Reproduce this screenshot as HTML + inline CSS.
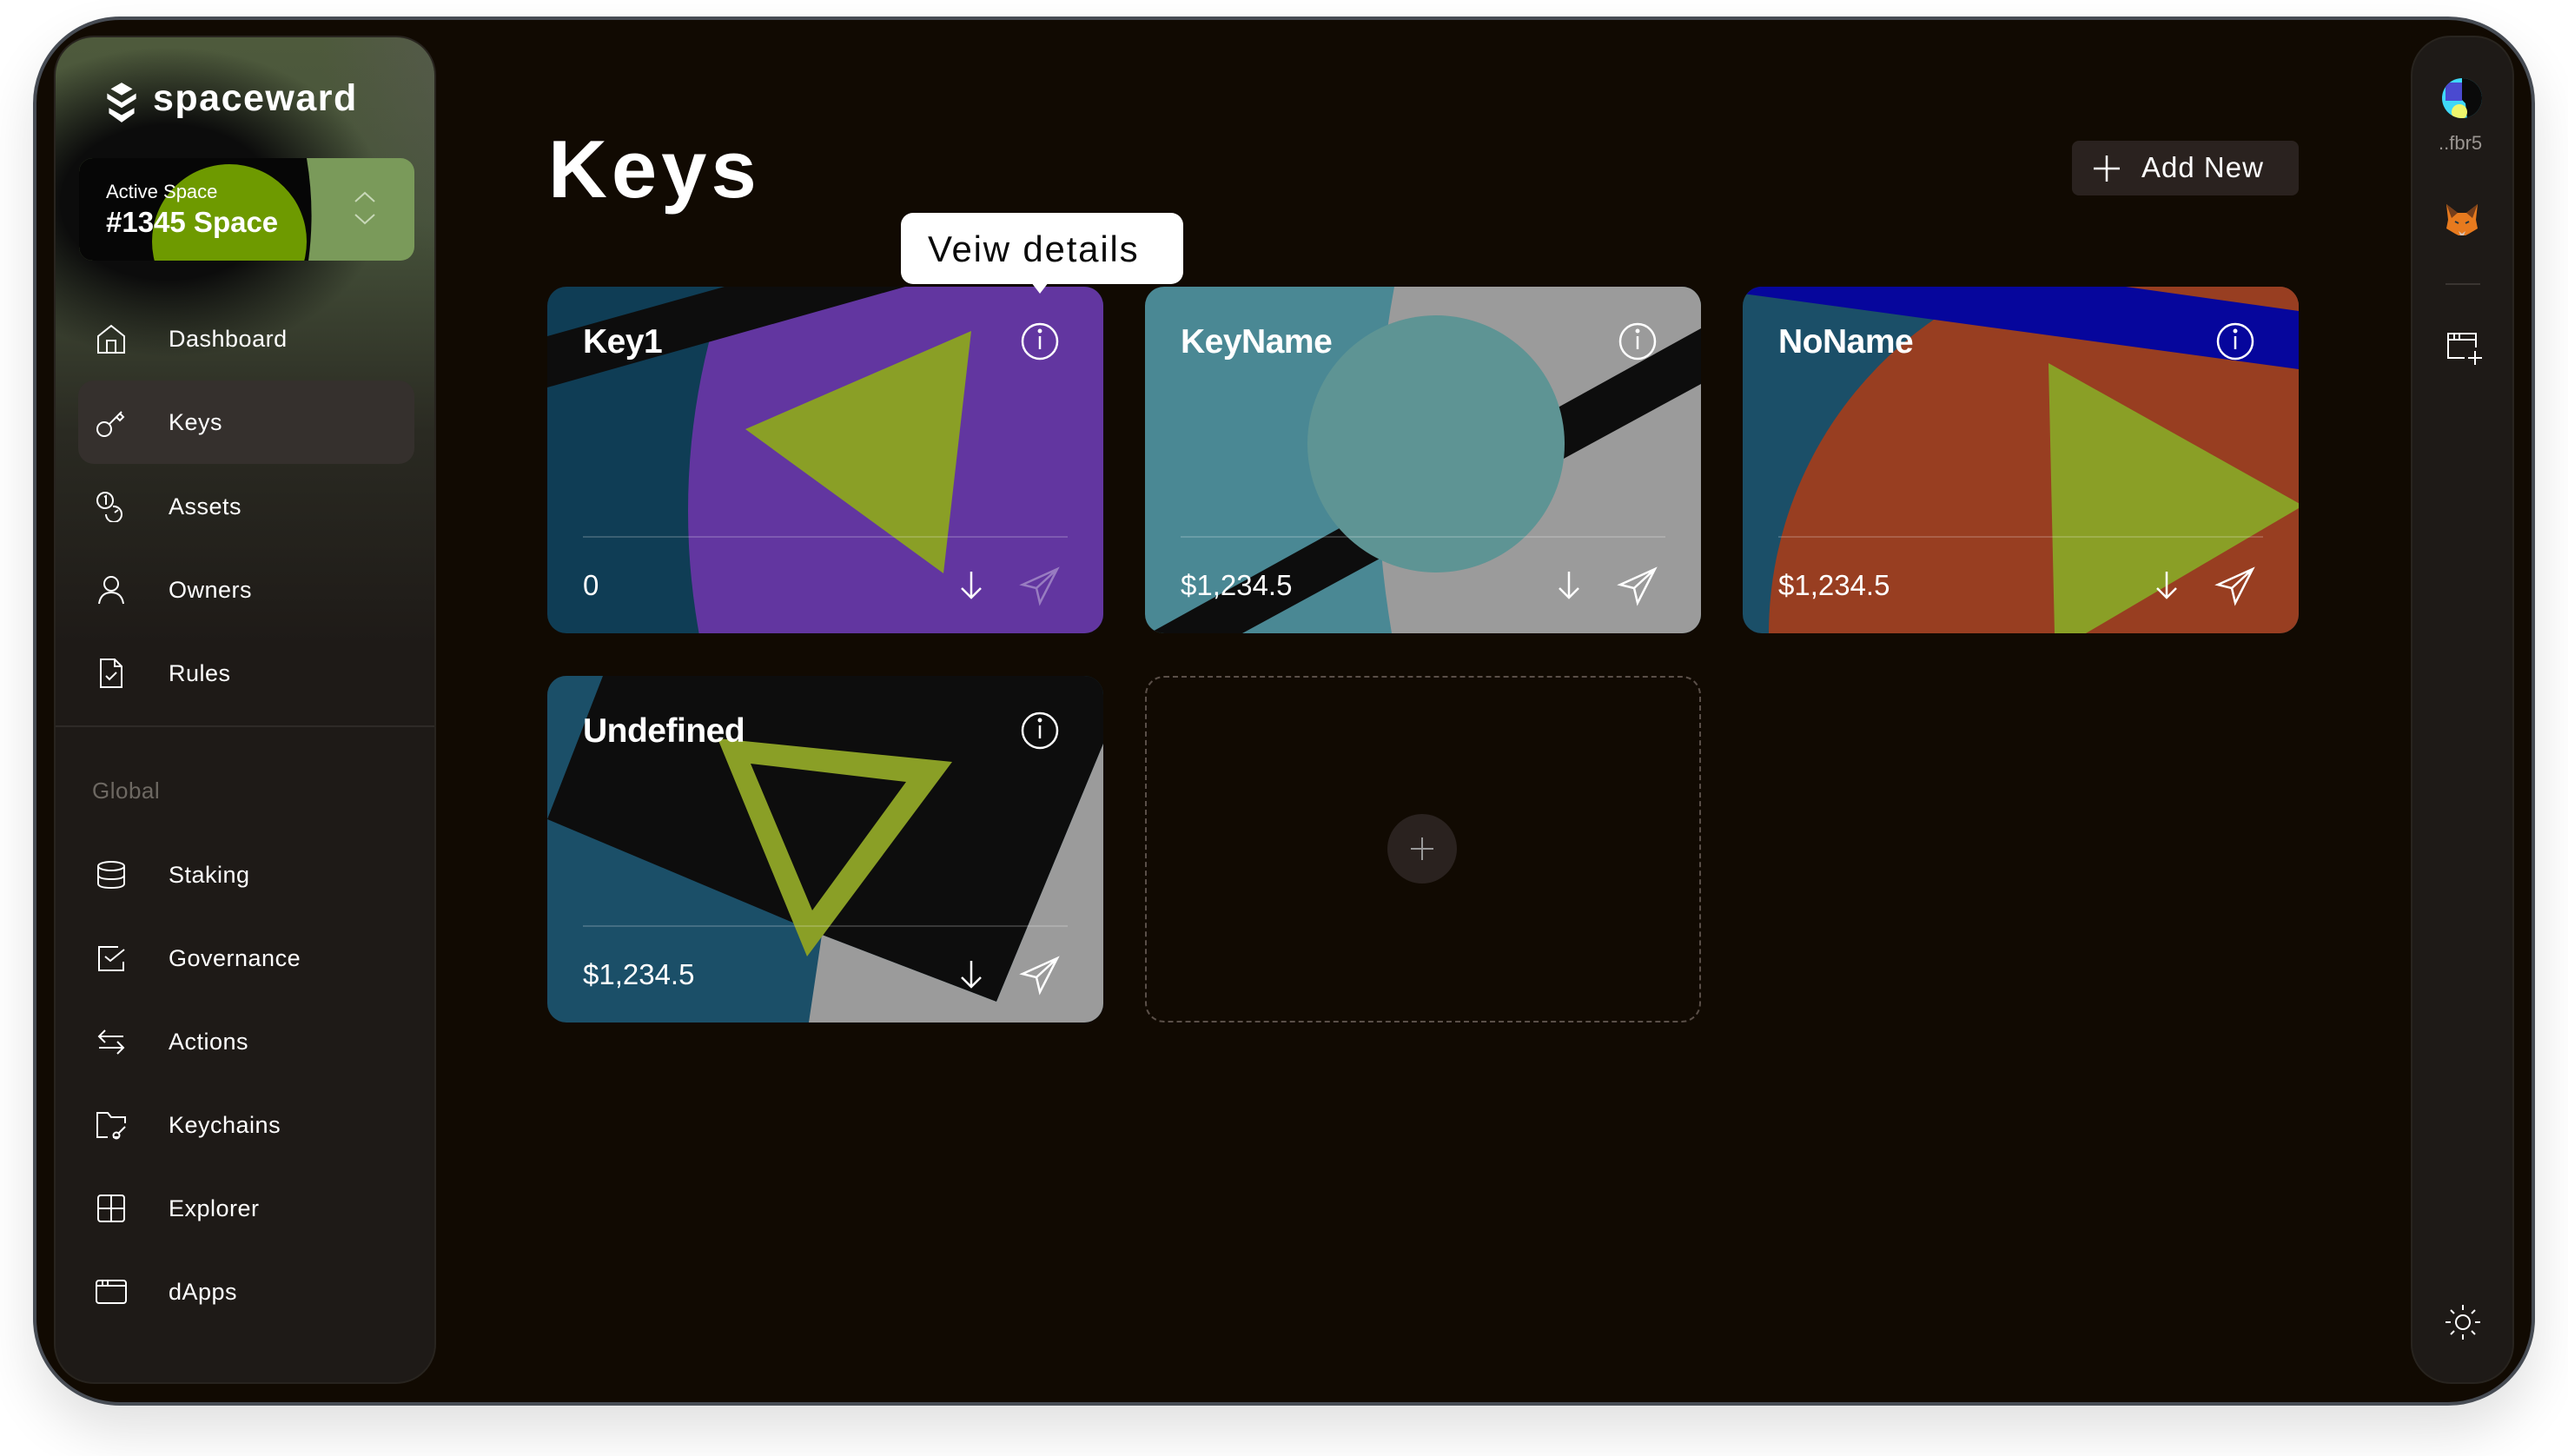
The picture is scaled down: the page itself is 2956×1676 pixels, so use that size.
<!DOCTYPE html>
<html><head><meta charset="utf-8"><style>
*{margin:0;padding:0;box-sizing:border-box}
body{width:2956px;height:1676px;background:#fff;position:relative;overflow:hidden;font-family:"Liberation Sans",sans-serif;color:#fff}
.abs{position:absolute}
.frame{left:38px;top:19px;width:2880px;height:1599px;background:#110a02;border:4px solid #474c54;border-radius:100px;box-shadow:0 30px 60px rgba(0,0,0,.12)}
.side{left:62px;top:41px;width:440px;height:1552px;border-radius:46px;background:#1e1a17;border:2px solid #28241f;overflow:hidden}
.nav{position:absolute;left:0;width:440px;height:60px;font-size:27px;letter-spacing:.5px}
.nav svg{position:absolute;left:46px;top:12px}
.nav span{position:absolute;left:130px;top:15px}
.card{position:absolute;width:640px;height:399px;border-radius:22px;overflow:hidden}
.card svg.bg{position:absolute;left:0;top:0}
.ct{position:absolute;left:41px;top:42px;font-size:39px;font-weight:bold;letter-spacing:-.5px}
.cv{position:absolute;left:41px;top:325px;font-size:33px}
.cl{position:absolute;left:41px;top:287px;width:558px;height:2px;background:rgba(255,255,255,.18)}
</style></head><body>
<div class="abs frame"></div>

<!-- sidebar -->
<div class="abs side">
  <div class="abs" style="left:0;top:0;width:440px;height:700px;background:linear-gradient(180deg,#4e5a3c 0%,#46523a 30%,#2a2a22 65%,#1e1a17 100%)"></div>
  <div class="abs" style="left:-120px;top:10px;width:500px;height:360px;border-radius:50%;background:radial-gradient(ellipse at center,#0c0c0c 35%,rgba(12,12,12,0) 70%)"></div>
  <div class="abs" style="left:300px;top:-20px;width:200px;height:300px;background:radial-gradient(ellipse at right top,rgba(90,90,85,.7),rgba(90,90,85,0) 70%)"></div>
  <!-- logo -->
  <svg class="abs" style="left:55px;top:50px" width="42" height="52" viewBox="0 0 40 50"><path d="M20 2 L32 9 L20 16 L8 9Z" fill="#fff"/><path d="M4 14 L20 24 L36 14 L36 20 L20 30 L4 20Z" fill="#fff"/><path d="M6 30 L20 38 L34 30 L34 36 L20 46 L6 36Z" fill="#fff"/></svg>
  <div class="abs" style="left:112px;top:46px;font-size:43px;font-weight:bold;letter-spacing:1.5px">spaceward</div>
  <!-- active space -->
  <div class="abs" style="left:27px;top:139px;width:386px;height:118px;border-radius:16px;overflow:hidden;background:#7a9a5a">
    <svg class="abs" style="left:0;top:0" width="386" height="118"><path d="M0 0 H262 Q272 60 264 118 H0Z" fill="#060606"/><circle cx="173" cy="96" r="89" fill="#6e9a00"/></svg>
    <div class="abs" style="left:31px;top:26px;font-size:22px">Active Space</div>
    <div class="abs" style="left:31px;top:55px;font-size:33px;font-weight:bold">#1345 Space</div>
    <svg class="abs" style="left:316px;top:38px" width="26" height="40"><path d="M2 12 L13 2 L24 12 M2 27 L13 37 L24 27" stroke="#c8d8b8" stroke-width="2" fill="none"/></svg>
  </div>
  <!-- Keys highlight -->
  <div class="abs" style="left:26px;top:395px;width:387px;height:96px;border-radius:18px;background:#35302d"></div>

  <div class="nav" style="top:317px"><svg width="36" height="36" viewBox="0 0 36 36" fill="none" stroke="#fff" stroke-width="2"><path d="M3 15 L18 3 L33 15 V34 H3Z M13 34 V20 H23 V34"/></svg><span>Dashboard</span></div>
  <div class="nav" style="top:413px"><svg width="36" height="36" viewBox="0 0 36 36" fill="none" stroke="#fff" stroke-width="2"><circle cx="10" cy="26" r="8"/><path d="M16 20 L30 6 M24 12 L28 16 L32 12 L28 8"/></svg><span>Keys</span></div>
  <div class="nav" style="top:510px"><svg width="36" height="36" viewBox="0 0 36 36" fill="none" stroke="#fff" stroke-width="2"><circle cx="11" cy="11" r="9"/><path d="M10 7 L12 6 V16"/><path d="M20 18 A9 9 0 1 1 12 27"/><path d="M22 25 L26 22"/></svg><span>Assets</span></div>
  <div class="nav" style="top:606px"><svg width="36" height="36" viewBox="0 0 36 36" fill="none" stroke="#fff" stroke-width="2"><circle cx="18" cy="11" r="8"/><path d="M4 34 Q6 21 18 21 Q30 21 32 34"/></svg><span>Owners</span></div>
  <div class="nav" style="top:702px"><svg width="36" height="36" viewBox="0 0 36 36" fill="none" stroke="#fff" stroke-width="2"><path d="M6 2 H22 L30 10 V34 H6Z M22 2 V10 H30 M12 21 L16 25 L24 17"/></svg><span>Rules</span></div>

  <div class="abs" style="left:0;top:792px;width:440px;height:2px;background:#2e2a27"></div>
  <div class="abs" style="left:42px;top:852px;font-size:26px;color:#6d6862;letter-spacing:.5px">Global</div>

  <div class="nav" style="top:934px"><svg width="36" height="36" viewBox="0 0 36 36" fill="none" stroke="#fff" stroke-width="2"><ellipse cx="18" cy="8" rx="15" ry="5"/><path d="M3 8 V28 Q3 33 18 33 Q33 33 33 28 V8 M3 18 Q3 23 18 23 Q33 23 33 18"/></svg><span>Staking</span></div>
  <div class="nav" style="top:1030px"><svg width="36" height="36" viewBox="0 0 36 36" fill="none" stroke="#fff" stroke-width="2"><path d="M26 5 H4 V32 H32 V22 M11 16 L17 21 L33 8"/></svg><span>Governance</span></div>
  <div class="nav" style="top:1126px"><svg width="36" height="36" viewBox="0 0 36 36" fill="none" stroke="#fff" stroke-width="2"><path d="M32 12 H5 M11 5 L4 12 L11 19 M4 25 H31 M25 18 L32 25 L25 32"/></svg><span>Actions</span></div>
  <div class="nav" style="top:1222px"><svg width="36" height="36" viewBox="0 0 36 36" fill="none" stroke="#fff" stroke-width="2"><path d="M14 32 H2 V4 H14 L18 9 H34 V16 M20 32 H26"/><circle cx="24" cy="30" r="3.5"/><path d="M27 27 L34 20"/></svg><span>Keychains</span></div>
  <div class="nav" style="top:1318px"><svg width="36" height="36" viewBox="0 0 36 36" fill="none" stroke="#fff" stroke-width="2"><rect x="3" y="3" width="30" height="30" rx="3"/><path d="M18 3 V33 M3 18 H33"/></svg><span>Explorer</span></div>
  <div class="nav" style="top:1414px"><svg width="36" height="36" viewBox="0 0 36 36" fill="none" stroke="#fff" stroke-width="2"><rect x="1" y="5" width="34" height="26" rx="3"/><path d="M1 11 H35 M8 5 V11 M14 5 V11"/></svg><span>dApps</span></div>
</div>

<!-- title -->
<div class="abs" style="left:631px;top:148px;font-size:94px;font-weight:bold;letter-spacing:5px;line-height:1">Keys</div>

<!-- Add New -->
<div class="abs" style="left:2385px;top:162px;width:261px;height:63px;border-radius:8px;background:#2a221f"></div>
<svg class="abs" style="left:2409px;top:178px" width="32" height="32"><path d="M16 1 V31 M1 16 H31" stroke="#fff" stroke-width="2.5"/></svg>
<div class="abs" style="left:2465px;top:174px;font-size:33px;letter-spacing:1px">Add New</div>

<!-- Card 1 -->
<div class="card" style="left:630px;top:330px;background:#0f3d55">
  <svg class="bg" width="640" height="399"><circle cx="957" cy="258" r="795" fill="#6236a0"/><path d="M0 57 L204 0 L412 0 L0 116Z" fill="#0d0d0d"/><path d="M228 164 L488 51 L456 330Z" fill="#8a9f26"/></svg>
  <div class="ct">Key1</div><div class="cl"></div><div class="cv">0</div>
</div>
<!-- Card 2 -->
<div class="card" style="left:1318px;top:330px;background:#4a8894">
  <svg class="bg" width="640" height="399"><path d="M287 0 Q250 200 284 399 H640 V0Z" fill="#9b9b9b"/><path d="M640 48 L640 112 L112 399 L5 399Z" fill="#0d0d0d"/><circle cx="335" cy="181" r="148" fill="#5e9494"/></svg>
  <div class="ct">KeyName</div><div class="cl"></div><div class="cv">$1,234.5</div>
</div>
<!-- Card 3 -->
<div class="card" style="left:2006px;top:330px;background:#1b4f68">
  <svg class="bg" width="640" height="399"><circle cx="470" cy="400" r="440" fill="#983e21"/><path d="M400 0 H640 V40Z" fill="#983e21"/><path d="M0 -62 L640 28 L640 95 L0 8Z" fill="#06069c"/><path d="M352 88 L645 252 L395 399 L359 399Z" fill="#8a9f26"/></svg>
  <div class="ct">NoName</div><div class="cl"></div><div class="cv">$1,234.5</div>
</div>
<!-- Card 4 -->
<div class="card" style="left:630px;top:778px;background:#1b4f68">
  <svg class="bg" width="640" height="399"><path d="M64 0 L640 0 L640 78 L517 375 L316 298 L0 165 L0 0Z" fill="#0d0d0d"/><path d="M0 0 L64 0 L0 165Z" fill="#1b4f68"/><path d="M640 78 L640 399 L301 399 L316 298 L517 375Z" fill="#9b9b9b"/><path fill-rule="evenodd" d="M196 72 L466 99 L299 323Z M234 101 L413 122 L305 270Z" fill="#8a9f26"/></svg>
  <div class="ct">Undefined</div><div class="cl"></div><div class="cv">$1,234.5</div>
</div>

<!-- card icons -->
<svg class="abs" style="left:0;top:0" width="2956" height="1676" fill="none" stroke="#fff" stroke-width="2.5">
  <circle cx="1197" cy="393" r="20"/><path d="M1197 387 V402"/><circle cx="1197" cy="381" r="1.2" fill="#fff"/>
  <circle cx="1885" cy="393" r="20"/><path d="M1885 387 V402"/><circle cx="1885" cy="381" r="1.2" fill="#fff"/>
  <circle cx="2573" cy="393" r="20"/><path d="M2573 387 V402"/><circle cx="2573" cy="381" r="1.2" fill="#fff"/>
  <circle cx="1197" cy="841" r="20"/><path d="M1197 835 V850"/><circle cx="1197" cy="829" r="1.2" fill="#fff"/>
  <path d="M1118 658 V688 M1107 677 L1118 688 L1129 677"/>
  <path d="M1806 658 V688 M1795 677 L1806 688 L1817 677"/>
  <path d="M2494 658 V688 M2483 677 L2494 688 L2505 677"/>
  <path d="M1118 1106 V1136 M1107 1125 L1118 1136 L1129 1125"/>
  <path d="M1217 655 L1177 673 L1193 677 L1197 694Z M1193 677 L1217 655" stroke-opacity=".35"/>
  <path d="M1905 655 L1865 673 L1881 677 L1885 694Z M1881 677 L1905 655"/>
  <path d="M2593 655 L2553 673 L2569 677 L2573 694Z M2569 677 L2593 655"/>
  <path d="M1217 1103 L1177 1121 L1193 1125 L1197 1142Z M1193 1125 L1217 1103"/>
</svg>

<!-- tooltip -->
<div class="abs" style="left:1037px;top:245px;width:325px;height:82px;background:#fff;border-radius:14px"></div>
<svg class="abs" style="left:1187px;top:325px" width="20" height="14"><path d="M0 0 H20 L10 13Z" fill="#fff"/></svg>
<div class="abs" style="left:1068px;top:263px;font-size:42px;color:#0a0a0a;letter-spacing:1.8px">Veiw details</div>

<!-- add card -->
<div class="abs" style="left:1318px;top:778px;width:640px;height:399px;border:2px dashed #5a4f48;border-radius:22px"></div>
<div class="abs" style="left:1597px;top:937px;width:80px;height:80px;border-radius:50%;background:#2a221f"></div>
<svg class="abs" style="left:1622px;top:962px" width="30" height="30"><path d="M15 2 V28 M2 15 H28" stroke="#999" stroke-width="2"/></svg>

<!-- right bar -->
<div class="abs" style="left:2775px;top:41px;width:119px;height:1552px;border-radius:46px;background:#1e1a17;border:2px solid #28241f"></div>
<svg class="abs" style="left:2810px;top:89px" width="48" height="48" viewBox="0 0 48 48"><defs><clipPath id="av"><circle cx="24" cy="24" r="23"/></clipPath></defs><g clip-path="url(#av)"><rect width="48" height="48" fill="#3fd8f8"/><path d="M24 0 H48 V48 H30 L28 30 L24 26Z" fill="#0a0a0a"/><rect x="5" y="6" width="19" height="21" fill="#4a4ad0"/><circle cx="21" cy="40" r="9" fill="#eef66c"/></g></svg>
<div class="abs" style="left:2807px;top:152px;font-size:22px;color:#9a9591">..fbr5</div>
<svg class="abs" style="left:2814px;top:233px" width="40" height="40" viewBox="0 0 40 40"><path d="M2 2 L15 12 L25 12 L38 2 L36 20 L38 30 L28 36 L24 38 L16 38 L12 36 L2 30 L4 20Z" fill="#e77a1e"/><path d="M2 2 L15 12 L8 18Z M38 2 L25 12 L32 18Z" fill="#763e1a"/><path d="M16 33 L20 36 L24 33 L22 38 L18 38Z" fill="#d7c1b3"/><path d="M12 22 L16 24 M28 22 L24 24" stroke="#23343e" stroke-width="2"/></svg>
<div class="abs" style="left:2815px;top:326px;width:40px;height:2px;background:#3a3531"></div>
<svg class="abs" style="left:2815px;top:380px" width="42" height="42" viewBox="0 0 42 42" fill="none" stroke="#fff" stroke-width="2"><path d="M22 32 H3 V4 H35 V20 M3 11 H35 M10 4 V11 M16 4 V11 M34 24 V40 M26 32 H42"/></svg>
<svg class="abs" style="left:2813px;top:1500px" width="44" height="44" viewBox="0 0 44 44" fill="none" stroke="#fff" stroke-width="2"><circle cx="22" cy="22" r="8"/><path d="M22 2 V8 M22 36 V42 M2 22 H8 M36 22 H42 M8 8 L12 12 M32 32 L36 36 M36 8 L32 12 M8 36 L12 32"/></svg>
</body></html>
